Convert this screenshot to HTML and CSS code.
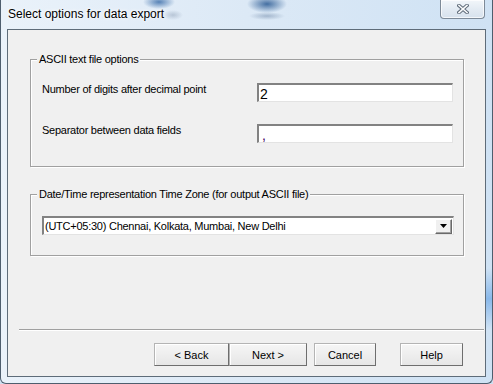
FILE: index.html
```html
<!DOCTYPE html>
<html>
  <head>
    <title>Select options for data export</title>
    <meta charset="UTF-8">
    <link rel="stylesheet" href="styles.css">
  </head>
  <body>
    <div class="window">
      <div class="titlebar">
        <span class="title">Select options for data export</span>
        <button class="close" title="Close">
          <svg width="12" height="10" viewBox="0 0 12 10">
            <path d="M2 1.5 L10 8.5 M10 1.5 L2 8.5" stroke="#5f6c7a" stroke-width="3.6" stroke-linecap="square"/>
            <path d="M2 1.5 L10 8.5 M10 1.5 L2 8.5" stroke="#fbfcfd" stroke-width="1.6" stroke-linecap="square"/>
          </svg>
        </button>
      </div>
      <div class="client">
        <fieldset class="group ascii">
          <legend>ASCII text file options</legend>
          <div class="rows">
            <label for="digits">Number of digits after decimal point</label>
            <input class="field" id="digits" type="text" value="2">
            <label for="sep">Separator between data fields</label>
            <input class="field sepval" id="sep" type="text" value=",">
          </div>
        </fieldset>
        <fieldset class="group zone">
          <legend>Date/Time representation Time Zone (for output ASCII file)</legend>
          <div class="combo">
            <span class="combo-text">(UTC+05:30) Chennai, Kolkata, Mumbai, New Delhi</span>
            <span class="drop">
              <svg width="7" height="4" viewBox="0 0 7 4"><path d="M0 0 H7 L3.5 4 Z" fill="#000"/></svg>
            </span>
          </div>
        </fieldset>
        <div class="footer">
          <hr class="sep">
          <div class="buttons">
            <button class="btn back">&lt; Back</button>
            <button class="btn next">Next &gt;</button>
            <button class="btn cancel">Cancel</button>
            <button class="btn help">Help</button>
          </div>
        </div>
      </div>
    </div>
  </body>
</html>
```

FILE: styles.css
```css
html, body {
  margin: 0;
  height: 100%;
}
body {
  font-family: 'Liberation Sans', Arial, sans-serif;
  font-size: 11px;
  letter-spacing: -0.25px;
  color: #000;
  background: #cfe0f1;
}
.window {
  box-sizing: border-box;
  width: 493px;
  height: 384px;
  display: flex;
  flex-direction: column;
  padding: 0 6px 6px;
  border: 1px solid #4e5e6e;
  border-top: none;
  border-radius: 0 0 6px 6px;
  background:
    radial-gradient(ellipse 16px 7px at 158px 2px, rgba(40,95,160,.75), rgba(40,95,160,0)),
    radial-gradient(ellipse 20px 9px at 266px 4px, rgba(30,80,140,.8), rgba(30,80,140,0)),
    radial-gradient(ellipse 18px 4px at 266px 16px, rgba(60,90,130,.35), rgba(60,90,130,0)),
    radial-gradient(ellipse 10px 5px at 172px 15px, rgba(90,110,140,.3), rgba(90,110,140,0)),
    linear-gradient(to bottom, rgba(255,255,255,0) 70%, rgba(80,150,225,.55) 78%, rgba(255,255,255,0) 86%) right / 7px 100% no-repeat,
    linear-gradient(to right, #eaf2fa, #dce9f6 50%, #cfe2f4);
}
.titlebar {
  height: 29px;
  display: flex;
  justify-content: space-between;
  align-items: flex-start;
  flex: none;
}
.title {
  font-size: 12px;
  letter-spacing: 0;
  line-height: 15px;
  margin: 7px 0 0 1px;
  text-shadow: 0 0 5px #fff, 0 0 3px #fff;
}
.close {
  width: 45px;
  height: 19px;
  margin-right: 1px;
  padding: 0;
  border: 1px solid #7d8a98;
  border-top: none;
  border-radius: 0 0 4px 4px;
  background: linear-gradient(#f2f6fa, #e3ebf3 50%, #d7e2ed);
  box-shadow: inset 0 0 0 1px rgba(255,255,255,.7);
  display: flex;
  align-items: center;
  justify-content: center;
}
.client {
  flex: 1;
  display: flex;
  flex-direction: column;
  border: 1px solid #5e6c79;
  background: #f0f0f0;
}
.group {
  min-width: 0;
  margin: 23px 21px 0 22px;
  border: 1px solid #a0a0a0;
  box-shadow: inset 1px 1px #fff, 1px 1px #fff;
}
.group legend {
  padding: 0 2px;
  margin-left: -5px;
  line-height: 13px;
  background: #f0f0f0;
}
.ascii {
  padding: 17px 10px 23px 11px;
}
.zone {
  margin-top: 21px;
  padding: 15px 9px 20px 11px;
}
.rows {
  display: grid;
  grid-template-columns: 1fr 196px;
  row-gap: 22px;
  align-items: start;
}
.rows label {
  line-height: 13px;
}
.field {
  box-sizing: border-box;
  width: 196px;
  height: 19px;
  margin: 0;
  padding: 1px 1px 0;
  border-style: solid;
  border-width: 2px 1px 1px 2px;
  border-color: #828282 #e3e3e3 #e3e3e3 #828282;
  background: #fff;
  font-family: inherit;
  font-size: 14px;
  letter-spacing: 0;
  line-height: 15px;
  color: #000;
  outline: none;
}
.sepval {
  color: #400060;
  padding-left: 3px;
}
.combo {
  box-sizing: border-box;
  height: 19px;
  display: flex;
  align-items: center;
  border-style: solid;
  border-width: 2px 1px 1px 2px;
  border-color: #828282 #e3e3e3 #e3e3e3 #828282;
  background: #fff;
}
.combo-text {
  flex: 1;
  padding-left: 1px;
  padding-top: 1px;
  line-height: 13px;
}
.drop {
  box-sizing: border-box;
  width: 17px;
  height: 15px;
  margin-right: 1px;
  display: flex;
  align-items: center;
  justify-content: center;
  border: 1px solid;
  border-color: #fff #696969 #696969 #fff;
  background: #f0f0f0;
  box-shadow: inset -1px -1px #a0a0a0;
}
.footer {
  margin-top: auto;
}
.sep {
  height: 0;
  margin: 0 1px 12px 11px;
  border: 0;
  border-top: 1px solid #a0a0a0;
  border-bottom: 1px solid #fff;
}
.buttons {
  display: flex;
  justify-content: flex-end;
  padding: 0 22px 10px 0;
}
.btn {
  box-sizing: border-box;
  height: 23px;
  margin: 0;
  padding: 0;
  border: 1px solid;
  border-color: #b4b4b4 #6e6e6e #6e6e6e #b4b4b4;
  background: linear-gradient(#f6f6f6, #e6e6e6);
  box-shadow: inset 1px 1px #fff;
  font: inherit;
  color: #000;
}
.back { width: 75px; }
.next { width: 78px; }
.cancel { width: 62px; margin-left: 7px; }
.help { width: 63px; margin-left: 24px; }
```
